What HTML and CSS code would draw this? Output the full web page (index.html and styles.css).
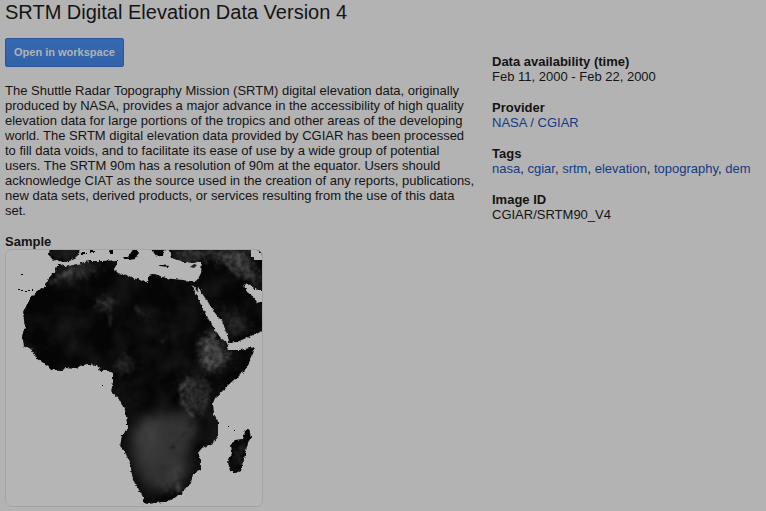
FILE: index.html
```html
<!DOCTYPE html>
<html lang="en">
<head>
<meta charset="utf-8">
<title>SRTM Digital Elevation Data Version 4</title>
<link rel="stylesheet" href="styles.css">
</head>
<body>
<main class="page">
  <h1 class="title">SRTM Digital Elevation Data Version 4</h1>
  <div class="columns">
    <section class="main">
      <button class="open" type="button">Open in workspace</button>
      <p class="description">The Shuttle Radar Topography Mission (SRTM) digital elevation data, originally produced by NASA, provides a major advance in the accessibility of high quality elevation data for large portions of the tropics and other areas of the developing world. The SRTM digital elevation data provided by CGIAR has been processed to fill data voids, and to facilitate its ease of use by a wide group of potential users. The SRTM 90m has a resolution of 90m at the equator. Users should acknowledge CIAT as the source used in the creation of any reports, publications, new data sets, derived products, or services resulting from the use of this data set.</p>
      <h2 class="label">Sample</h2>
      <svg class="sample" viewBox="6 250 256 256" role="img" aria-label="Elevation map of Africa">
        <defs>
          <filter id="rough" x="-5%" y="-5%" width="110%" height="110%" color-interpolation-filters="sRGB">
            <feTurbulence type="fractalNoise" baseFrequency="0.3" numOctaves="2" seed="4" result="n"/>
            <feDisplacementMap in="SourceGraphic" in2="n" scale="4" xChannelSelector="R" yChannelSelector="G"/>
          </filter>
          <filter id="relief" x="0" y="0" width="100%" height="100%" color-interpolation-filters="sRGB">
            <feTurbulence type="fractalNoise" baseFrequency="0.035" numOctaves="6" seed="9"/>
            <feColorMatrix values="0 0 0 0 .4  0 0 0 0 .4  0 0 0 0 .4  1.2 0 0 0 -.4"/>
          </filter>
          <filter id="plateau" x="-50%" y="-50%" width="200%" height="200%" color-interpolation-filters="sRGB">
            <feGaussianBlur stdDeviation="6"/>
          </filter>
          <filter id="soft" x="-50%" y="-50%" width="200%" height="200%" color-interpolation-filters="sRGB">
            <feGaussianBlur in="SourceGraphic" stdDeviation="4" result="b"/>
            <feTurbulence type="fractalNoise" baseFrequency="0.15" numOctaves="4" seed="2" result="n"/>
            <feDisplacementMap in="b" in2="n" scale="14" xChannelSelector="R" yChannelSelector="G" result="d"/>
            <feTurbulence type="fractalNoise" baseFrequency="0.22" numOctaves="3" seed="6"/>
            <feColorMatrix values="0 0 0 0 0  0 0 0 0 0  0 0 0 0 0  1.2 0 0 0 .2" result="grain"/>
            <feComposite in="d" in2="grain" operator="in"/>
          </filter>
          <filter id="ridge" x="-50%" y="-50%" width="200%" height="200%" color-interpolation-filters="sRGB">
            <feTurbulence type="fractalNoise" baseFrequency="0.3" numOctaves="3" seed="3" result="n"/>
            <feDisplacementMap in="SourceGraphic" in2="n" scale="10" xChannelSelector="R" yChannelSelector="G" result="d"/>
            <feGaussianBlur in="d" stdDeviation="0.8"/>
          </filter>
          <path id="africa" d="M60 264L65 267 77 264 90 261 103 261 117 260 117 264 114 269 118 273 127 275 133 278 140 280 145 283 149 280 149 276 155 274 165 278 173 279 183 280 191 281 197 281 201 273 202 261 193 263 185 262 177 260 172 258 171 254 167 247H265V290H257L247 283 244 286 247 292 255 298 257 304 260 302 265 306V330L253 335 237 342 229 343 228 337 223 323 215 313 208 302 201 292 199 287 197 291 191 284 197 295 203 310 212 325 220 337 227 343 229 350 240 350 255 347 252 357 245 370 238 377 227 387 215 398 213 403 214 415 218 422 218 437 213 443 202 448 198 453 201 460 201 470 193 474 191 483 183 492 173 499 163 502 148 504 143 503 143 497 138 488 133 480 130 463 125 452 120 447 122 435 127 430 127 422 125 410 118 398 111 392 113 382 113 373 109 371 100 371 97 365 87 364 80 366 75 369 67 368 60 371 53 370 47 366 37 358 32 350 24 346 22 336 25 327 23 313 28 302 35 292 45 287 47 280 55 271 58 264Z"/>
          <path id="madagascar" d="M249 429L251 437 248 443 245 455 241 470 236 473 230 471 228 462 232 453 231 444 235 440 242 439 245 431Z"/>
          <path id="iberia" d="M50 247H80L79 254 73 260 65 262 58 261 51 259 49 254Z"/>
          <clipPath id="land"><use href="#africa"/><use href="#madagascar"/><use href="#iberia"/></clipPath>
        </defs>
        <rect class="sea" x="6" y="250" width="256" height="256"/>
        <g filter="url(#rough)">
          <use href="#africa"/><use href="#madagascar"/><use href="#iberia"/>
          <path d="M109 248H113V253H110ZM122 257L128 257 132 251 135 247 139 253 135 259 129 260ZM151 248H166L163 255 157 257 154 253ZM159 264L169 265 168 267 160 266ZM81 252H86V254H81ZM90 250H95V252H90Z"/>
        </g>
        <path d="M18 289h2v1h-2zM21 290h2v1h-2zM25 291h2v1h-2zM28 290h2v1h-2zM32 289h1v2h-1zM21 274h2v1h-2zM102 385h1v1h-1zM228 426h1v1h-1zM234 430h1v1h-1z"/>
        <g clip-path="url(#land)">
          <rect x="6" y="250" width="256" height="256" filter="url(#relief)" opacity=".3"/>
          <g filter="url(#plateau)" class="high">
            <path d="M128 436L145 415 190 410 200 432 188 448 185 475 164 490 149 492 135 465Z" opacity=".38"/>
            <path d="M132 425L165 418 166 455 140 460Z" opacity=".14"/>
          </g>
          <g filter="url(#soft)" class="high">
            <path d="M179 380L190 374 205 380 207 403 197 415 184 405Z" opacity=".38"/>
            <path d="M202 337L213 330 217 343 232 357 218 370 204 371 199 358Z" opacity=".6"/>
            <path d="M175 250H242L257 276 262 289 250 280 232 268 215 257 180 260Z" opacity=".6"/>
            <path d="M51 282L69 269 104 263 99 269 72 278Z" opacity=".5"/>
            <path d="M212 302L225 318 232 336 256 330 240 318Z" opacity=".3"/>
            <path d="M94 302L110 297 115 307 102 311Z" opacity=".3"/>
            <path d="M112 370L122 357 134 361 130 372Z" opacity=".35"/>
            <path d="M135 309L145 315 141 321Z" opacity=".4"/>
            <path d="M51 251H76L71 258 56 257Z" opacity=".3"/>
            <path d="M241 443L247 444 239 465 234 461Z" opacity=".5"/>
            <path d="M165 480L183 472 180 488 160 492Z" opacity=".3"/>
          </g>
          <g class="ridges" filter="url(#ridge)">
            <path d="M49 283L60 276 72 271" opacity=".4"/>
            <path d="M98 301L108 305 102 311M108 298L118 304M110 316V328M134 306L143 314M161 343L168 336" opacity=".25"/>
            <path d="M209 338L205 356 211 370M217 348L222 358M213 333L215 345" opacity=".35"/>
            <path d="M187 378L180 391 183 405 194 417M204 377L209 390 203 409M177 482L180 489 174 494" opacity=".35"/>
          </g>
          <g class="valleys" filter="url(#ridge)">
            <path d="M195 417L190 428 179 439 170 448M196 418L200 431 199 443"/>
          </g>
        </g>
        <path class="sea" d="M251 250H259V253H262V260H254V257H251Z"/>
        <path class="island" d="M190 267L194 264 197 265 194 268Z"/>
      </svg>
    </section>
    <aside class="details">
      <dl class="facts">
        <div><dt>Data availability (time)</dt><dd>Feb 11, 2000 - Feb 22, 2000</dd></div>
        <div><dt>Provider</dt><dd><a href="#provider">NASA / CGIAR</a></dd></div>
        <div><dt>Tags</dt><dd><a href="#nasa">nasa</a>, <a href="#cgiar">cgiar</a>, <a href="#srtm">srtm</a>, <a href="#elevation">elevation</a>, <a href="#topography">topography</a>, <a href="#dem">dem</a></dd></div>
        <div><dt>Image ID</dt><dd>CGIAR/SRTM90_V4</dd></div>
      </dl>
    </aside>
  </div>
</main>
</body>
</html>
```
FILE: styles.css
```css
* { box-sizing: border-box; }
body {
  margin: 0;
  background: #b3b3b3;
  color: #141414;
  font: 13px/15px "Liberation Sans", Arial, sans-serif;
}
.page { padding: 0 5px 4px; }
.title {
  margin: 0;
  font-size: 20px;
  line-height: 24px;
  font-weight: 400;
}
.columns {
  display: grid;
  grid-template-columns: 471px 1fr;
  gap: 16px;
  margin-top: 14px;
}
.open {
  display: block;
  height: 29px;
  padding: 0 8px;
  border: 1px solid #2a5599;
  border-radius: 2px;
  background: linear-gradient(#3669b4, #3262a8);
  color: #b3b3b3;
  font: bold 11px/15px "Liberation Sans", Arial, sans-serif;
}
.description { margin: 16px 0; }
.label {
  margin: 0;
  font-size: 13px;
  line-height: 15px;
}
.sample {
  display: block;
  width: 258px;
  border: 1px solid #a3a3a3;
  border-radius: 7px;
  overflow: hidden;
  fill: #050505;
}
.sea { fill: #b5b5b5; }
.island { fill: #222; }
.high { fill: #777; }
.ridges { fill: none; stroke: #999; stroke-width: 2; }
.valleys { fill: none; stroke: #111; stroke-width: 1; }
.details { padding-top: 16px; }
.facts { display: grid; gap: 16px; margin: 0; }
.facts dt { font-weight: 700; }
.facts dd { margin: 0; }
.facts a { color: #133a83; text-decoration: none; }
```
